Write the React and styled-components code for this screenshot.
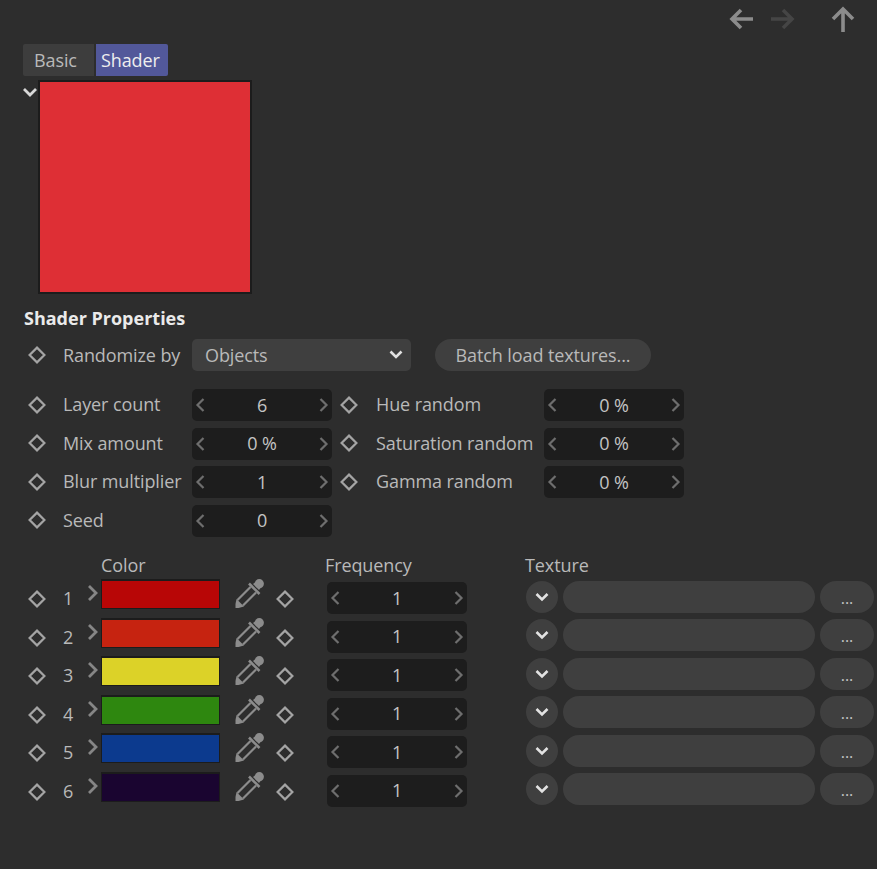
import React from "react";
import styled, { createGlobalStyle } from "styled-components";

const Global = createGlobalStyle`
  html, body { margin: 0; padding: 0; background: #2d2d2d; }
  body { font-family: "Open Sans", "Noto Sans", sans-serif; }
`;

const Page = styled.div`
  position: relative;
  width: 877px;
  height: 869px;
  overflow: hidden;
  background: #2d2d2d;
  color: #b9b9b9;
  font-size: 18px;
  letter-spacing: -0.1px;
`;
const NavBar = styled.div`
  position: absolute;
  top: 6px;
  left: 728px;
  width: 130px;
  height: 28px;
`;
const NavIcon = styled.svg`
  position: absolute;
  left: ${(p) => p.$x}px;
  top: 0;
  width: 28px;
  height: 28px;
  fill: none;
  stroke: ${(p) => (p.$off ? "#454545" : "#8c8c8c")};
  stroke-width: 3.6;
`;
const Tabs = styled.div`
  position: absolute;
  top: 44px;
  left: 23px;
  display: flex;
  height: 32px;
`;
const Tab = styled.div`
  width: ${(p) => p.$w}px;
  margin-left: ${(p) => p.$gap || 0}px;
  padding-left: ${(p) => p.$pad}px;
  box-sizing: border-box;
  line-height: 33px;
  border-radius: ${(p) => (p.$active ? "0 2px 2px 0" : "2px 0 0 2px")};
  background: ${(p) => (p.$active ? "#52589a" : "#3d3d3d")};
  color: ${(p) => (p.$active ? "#eeeeee" : "#b9b9b9")};
  font-size: 18px;
`;
const Collapse = styled.svg`
  position: absolute;
  left: 22px;
  top: 86px;
  width: 16px;
  height: 14px;
  fill: none;
  stroke: #d8d8d8;
  stroke-width: 2.8;
`;
const Preview = styled.div`
  position: absolute;
  left: 38px;
  top: 80px;
  width: 214px;
  height: 214px;
  box-sizing: border-box;
  border: 2px solid #1c1c1c;
  background: #de2f35;
`;
const Heading = styled.div`
  position: absolute;
  left: 24px;
  top: 306px;
  font-weight: 700;
  color: #eaeaea;
  font-size: 18px;
  letter-spacing: 0;
  line-height: 24px;
`;
const RandomRow = styled.div`
  position: absolute;
  left: 28px;
  top: 339px;
  display: flex;
  align-items: center;
  height: 32px;
  line-height: 30px;
`;
const DiamondIcon = styled.svg`
  flex: none;
  width: 18px;
  height: 18px;
  fill: none;
  stroke: #a4a4a4;
  stroke-width: 2.2;
  margin-left: ${(p) => p.$ml || 0}px;
  margin-top: ${(p) => p.$mt || 0}px;
`;
const Label = styled.div`
  flex: none;
  width: ${(p) => p.$w}px;
  margin-left: ${(p) => p.$ml}px;
  padding-bottom: ${(p) => p.$pb || 0}px;
  white-space: nowrap;
`;
const Select = styled.div`
  flex: none;
  width: 219px;
  height: 32px;
  box-sizing: border-box;
  padding: 0 8px 0 13px;
  border-radius: 5px;
  background: #3f3f3f;
  display: flex;
  align-items: center;
  justify-content: space-between;
`;
const PillButton = styled.div`
  flex: none;
  width: 216px;
  height: 32px;
  margin-left: 24px;
  border-radius: 16px;
  background: #3f3f3f;
  text-align: center;
  line-height: 32px;
`;
const PropGrid = styled.div`
  position: absolute;
  left: 28px;
  top: 389px;
  line-height: 30px;
`;
const PropRow = styled.div`
  display: flex;
  align-items: center;
  height: 32px;
  margin-bottom: 6.5px;
`;
const StepperBox = styled.div`
  flex: none;
  width: 140px;
  height: 32px;
  box-sizing: border-box;
  padding: 0 3px;
  border-radius: 5px;
  background: #1d1d1d;
  display: flex;
  align-items: center;
  justify-content: space-between;
  line-height: 31px;
`;
const StepperValue = styled.span`
  color: #c4c4c4;
`;
const StepArrow = styled.svg`
  width: 12px;
  height: 16px;
  fill: none;
  stroke: #6e6e6e;
  stroke-width: 2.2;
`;
const ColumnHead = styled.div`
  position: absolute;
  top: 553px;
  left: ${(p) => p.$x}px;
  line-height: 24px;
`;
const Layers = styled.div`
  position: absolute;
  left: 0;
  top: 579px;
`;
const LayerRow = styled.div`
  position: relative;
  height: 38.5px;
`;
const Slot = styled.div`
  position: absolute;
  left: ${(p) => p.$x}px;
  top: ${(p) => p.$y}px;
`;
const LayerNumber = styled.div`
  position: absolute;
  left: 63px;
  top: 6px;
  line-height: 26px;
`;
const ExpandIcon = styled.svg`
  position: absolute;
  left: 87px;
  top: 5px;
  width: 12px;
  height: 18px;
  fill: none;
  stroke: #868686;
  stroke-width: 2.8;
`;
const Swatch = styled.div`
  position: absolute;
  left: 101px;
  top: 0;
  width: 119px;
  height: 30px;
  box-sizing: border-box;
  border: 1px solid #1c1c1c;
  border-top-width: 2px;
  background: ${(p) => p.$color};
`;
const Dropper = styled.svg`
  position: absolute;
  left: 235px;
  top: 0;
  width: 29px;
  height: 29px;
`;
const RoundToggle = styled.div`
  position: absolute;
  left: 526px;
  top: 1.9px;
  width: 32px;
  height: 32px;
  border-radius: 50%;
  background: #3f3f3f;
  display: flex;
  align-items: center;
  justify-content: center;
`;
const ToggleChevron = styled.svg`
  width: 14px;
  height: 10px;
  fill: none;
  stroke: #e2e2e2;
  stroke-width: 2.6;
`;
const TextureField = styled.div`
  position: absolute;
  left: 563px;
  top: 1.9px;
  width: 252px;
  height: 32px;
  border-radius: 16px;
  background: #3f3f3f;
`;
const MoreButton = styled.div`
  position: absolute;
  left: 820px;
  top: 1.9px;
  width: 54px;
  height: 32px;
  border-radius: 16px;
  background: #3f3f3f;
  text-align: center;
  line-height: 34px;
  font-size: 16px;
  color: #c4c4c4;
`;

const Diamond = ({ ml, mt }) => (
  <DiamondIcon viewBox="0 0 18 18" $ml={ml} $mt={mt}>
    <path d="M9 1.6 16.400 9 9 16.400 1.600 9Z" />
  </DiamondIcon>
);

const Stepper = ({ value }) => (
  <StepperBox>
    <StepArrow viewBox="0 0 12 16"><path d="M8.500 2 2.500 8l6 6" /></StepArrow>
    <StepperValue>{value}</StepperValue>
    <StepArrow viewBox="0 0 12 16"><path d="M3.500 2l6 6-6 6" /></StepArrow>
  </StepperBox>
);

const layers = ["#b80606", "#c62310", "#dcd228", "#2e870f", "#0c3a8e", "#1a0530"];
const props = [
  ["Layer count", "6", "Hue random", "0 %"],
  ["Mix amount", "0 %", "Saturation random", "0 %"],
  ["Blur multiplier", "1", "Gamma random", "0 %"],
  ["Seed", "0"],
];

export default function App() {
  return (
    <Page>
      <Global />
      <NavBar>
        <NavIcon $x={0} viewBox="0 0 28 28"><path d="M25 13H4M13 4l-9 9 9 9" /></NavIcon>
        <NavIcon $x={42} $off viewBox="0 0 28 28"><path d="M1 13h21M13 4l9 9-9 9" /></NavIcon>
        <NavIcon $x={101} viewBox="0 0 28 28"><path d="M14 26V3M4 13 14 3l10 10" /></NavIcon>
      </NavBar>
      <Tabs>
        <Tab $w={71} $pad={11}>Basic</Tab>
        <Tab $w={72} $pad={5} $gap={2} $active>Shader</Tab>
      </Tabs>
      <Collapse viewBox="0 0 16 14"><path d="M2 3l6 6 6-6" /></Collapse>
      <Preview />
      <Heading>Shader Properties</Heading>
      <RandomRow>
        <Diamond />
        <Label $w={129} $ml={17}>Randomize by</Label>
        <Select>
          Objects
          <ToggleChevron viewBox="0 0 14 10"><path d="M1.500 1.500l5.500 5.500 5.500-5.500" /></ToggleChevron>
        </Select>
        <PillButton>Batch load textures...</PillButton>
      </RandomRow>
      <PropGrid>
        {props.map(([a, b, c, d]) => (
          <PropRow key={a}>
            <Diamond mt={-1} />
            <Label $w={129} $ml={17} $pb={2}>{a}</Label>
            <Stepper value={b} />
            {c && (
              <>
                <Diamond ml={8} mt={-1} />
                <Label $w={168} $ml={18} $pb={2}>{c}</Label>
                <Stepper value={d} />
              </>
            )}
          </PropRow>
        ))}
      </PropGrid>
      <ColumnHead $x={101}>Color</ColumnHead>
      <ColumnHead $x={325}>Frequency</ColumnHead>
      <ColumnHead $x={525}>Texture</ColumnHead>
      <Layers>
        {layers.map((c, i) => (
          <LayerRow key={c}>
            <Slot $x={28} $y={10}><Diamond /></Slot>
            <LayerNumber>{i + 1}</LayerNumber>
            <ExpandIcon viewBox="0 0 12 18"><path d="M2 2l7 7-7 7" /></ExpandIcon>
            <Swatch $color={c} />
            <Dropper viewBox="0 0 29 29">
              <circle cx="24.300" cy="4.700" r="4.600" fill="#8c8c8c" />
              <path d="M18 5 24 11 27 7 22 2Z" fill="#8c8c8c" />
              <path d="M14 4.500 24.500 15" stroke="#8c8c8c" strokeWidth="2.600" fill="none" />
              <path d="M15.500 8 2.500 21M21 13.500 8 26.500" stroke="#8c8c8c" strokeWidth="2.200" fill="none" />
              <path d="M1.500 20 9 27.500 3.500 29H.5V25Z" fill="#8c8c8c" />
            </Dropper>
            <Slot $x={276} $y={10}><Diamond /></Slot>
            <Slot $x={327} $y={3}><Stepper value="1" /></Slot>
            <RoundToggle>
              <ToggleChevron viewBox="0 0 14 10"><path d="M1.500 2l5.500 5.500 5.500-5.500" /></ToggleChevron>
            </RoundToggle>
            <TextureField />
            <MoreButton>...</MoreButton>
          </LayerRow>
        ))}
      </Layers>
    </Page>
  );
}
